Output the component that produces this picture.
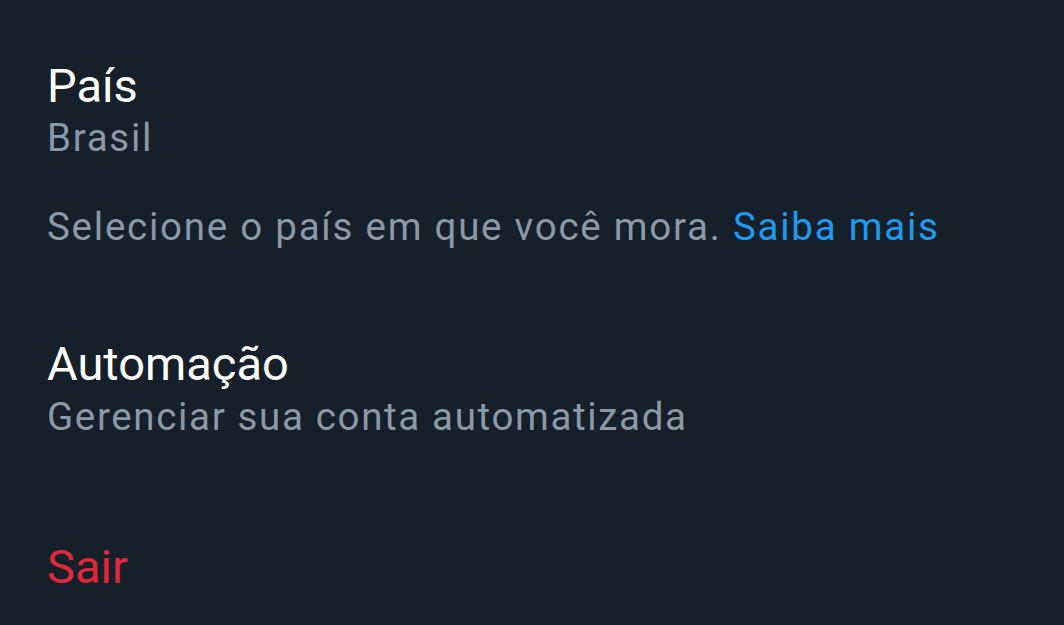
const App = () => (
  <div className="min-h-[625px] w-full bg-[#15202b] px-[47px] font-['Roboto',sans-serif]">
    <section className="pt-[61px]">
      <h2 className="text-[47px] leading-[50px] text-white">País</h2>
      <p className="mt-[2px] text-[38.5px] leading-[50px] tracking-[1.7px] text-[#8b98a5]">Brasil</p>
      <p className="mt-[39px] text-[38.5px] leading-[50px] tracking-[1.75px] text-[#8b98a5]">
        Selecione o país em que você mora. <a className="text-[#1d9bf0]">Saiba mais</a>
      </p>
    </section>

    <section className="mt-[87px]">
      <h2 className="text-[47px] leading-[50px] text-white">Automação</h2>
      <p className="mt-[3px] text-[38.5px] leading-[50px] tracking-[1.65px] text-[#8b98a5]">
        Gerenciar sua conta automatizada
      </p>
    </section>

    <section className="mt-[100px]">
      <button className="text-[47px] leading-[50px] text-[#e0283a]">Sair</button>
    </section>
  </div>
);

export default App;
